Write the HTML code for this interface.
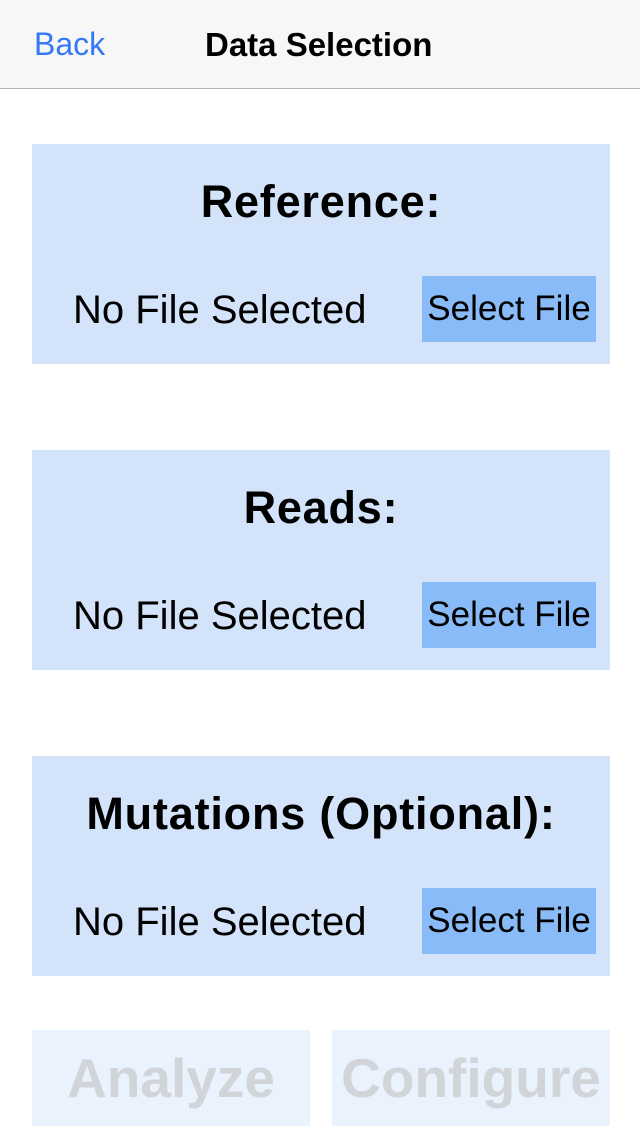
<!DOCTYPE html>
<html><head><style>
body{margin:0;width:640px;height:1136px;background:#fff;font-family:"Liberation Sans",sans-serif;position:relative;overflow:hidden}
.nav{position:absolute;left:0;top:0;width:640px;height:88px;background:#f7f7f7;border-bottom:1px solid #b2b2b2}
.abs{position:absolute;white-space:nowrap}
.panel{position:absolute;left:32px;width:578px;height:220px;background:#d2e3fa}
.title{position:absolute;left:0;width:578px;text-align:center;top:32px;font-size:45px;font-weight:bold;color:#000;letter-spacing:0.8px}
.nf{position:absolute;left:41px;top:144px;font-size:40px;color:#000}
.btn{position:absolute;left:390px;top:132px;width:174px;height:66px;background:#89bbf8;font-size:35px;line-height:66px;text-align:center;color:#000}
.bb{position:absolute;top:1030px;width:278px;height:96px;background:#eaf2fd;color:#d1d4d9;font-weight:bold;font-size:55px;line-height:96px;text-align:center}
</style></head><body>
<div class="nav">
<div class="abs" style="left:34px;top:26px;font-size:32px;color:#3478f6">Back</div>
<div class="abs" style="left:205px;top:26px;font-size:33px;font-weight:bold;color:#000">Data Selection</div>
</div>
<div class="panel" style="top:144px"><div class="title">Reference:</div><div class="nf">No File Selected</div><div class="btn">Select File</div></div>
<div class="panel" style="top:450px"><div class="title">Reads:</div><div class="nf">No File Selected</div><div class="btn">Select File</div></div>
<div class="panel" style="top:756px"><div class="title">Mutations (Optional):</div><div class="nf">No File Selected</div><div class="btn">Select File</div></div>
<div class="bb" style="left:32px">Analyze</div>
<div class="bb" style="left:332px">Configure</div>
</body></html>
